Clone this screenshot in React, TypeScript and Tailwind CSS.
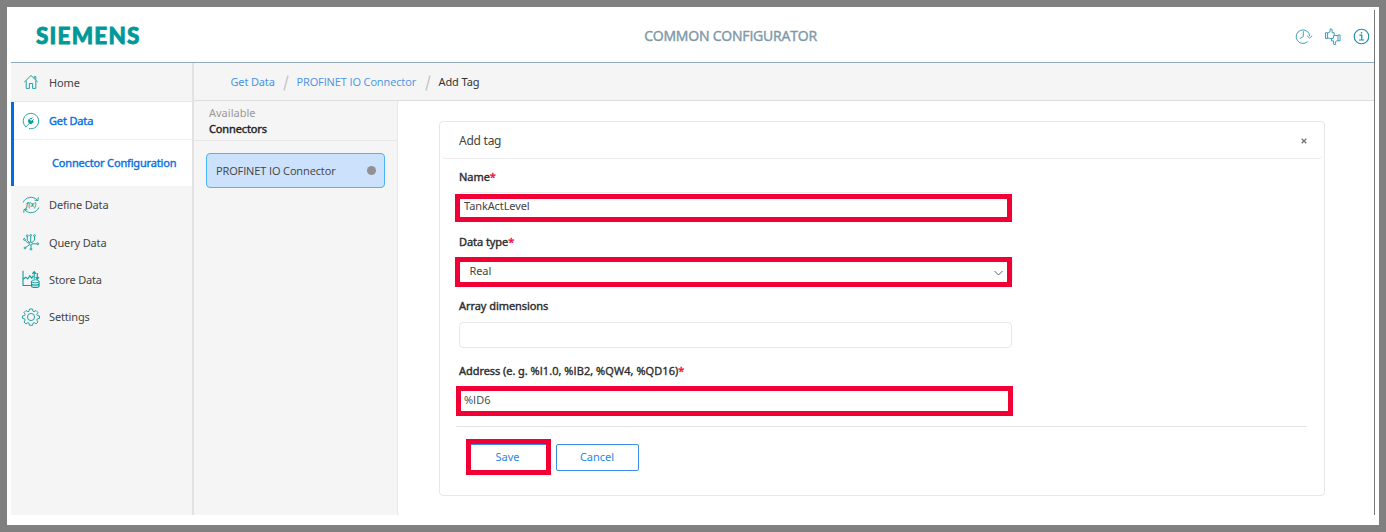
import type { ReactNode } from "react";

const BOLD = "[-webkit-text-stroke:0.4px_currentColor]";

function Icon({ children, size = 18, className = "" }: { children: ReactNode; size?: number; className?: string }) {
  return (
    <svg width={size} height={size} viewBox="0 0 18 18" fill="none" stroke="currentColor" strokeWidth="0.9" className={`shrink-0 ${className}`}>
      {children}
    </svg>
  );
}

const HomeIcon = () => (
  <Icon>
    <path d="M2.3 9 9 2.5 15.7 9M4.2 7.6v7.8h3.2v-4.9h3.2v4.9h3.2V7.6M12.2 5.2V3.6h1.6v3.2" />
  </Icon>
);
const ConnectIcon = () => (
  <Icon>
    <path d="M4.2 15.1A7.7 7.7 0 1 1 7 16.5M3.5 15.2l4-4" />
    <path d="M6.5 8.2 8.2 6.5l.9.6 1.5-1.5M9.9 9.1l1.7-1.7M6.5 8.2c-.3 2 .5 3.3 3.1 3.4l1.7-1.8Z" fill="currentColor" strokeWidth="1" />
  </Icon>
);
const DefineIcon = () => (
  <Icon>
    <path d="M1.2 6.5C3.2 1 11-.6 15.2 4M12.6 4.2l3.4.4.2-3.4M16.8 11.5C14.8 17 7 18.6 2.8 14M5.4 13.8l-3.4-.4-.2 3.4" />
    <text x="9" y="11.4" textAnchor="middle" fill="currentColor" stroke="none" fontSize="7" fontStyle="italic" fontWeight="600" fontFamily="Noto Sans, sans-serif">f(x)</text>
  </Icon>
);
const QueryIcon = () => (
  <Icon>
    <path d="M8.7 9V3.4M7.6 9.4 5.3 7.5V3.6M9.9 9.4l2.6-2V3.4M7 10.3 4.8 9.2l-1.6-2M10.6 10.8h4.2M7.4 11.8l-3.6 2.6M9 12.3v2.8" />
    <circle cx="8.8" cy="10.6" r="1.5" />
    <circle cx="8.7" cy="2.4" r="0.9" />
    <circle cx="5.3" cy="2.7" r="0.9" />
    <circle cx="12.5" cy="2.6" r="0.9" />
    <circle cx="2.4" cy="6.4" r="0.9" />
    <circle cx="15.8" cy="10.8" r="0.9" />
    <circle cx="3" cy="15" r="0.9" />
    <circle cx="9" cy="16.1" r="0.9" />
  </Icon>
);
const StoreIcon = () => (
  <Icon className="overflow-visible">
    <path d="M1 0.8v14.7h7.8M1 9.2l2.8-2 2 1.8 2-3.2 2 2.4 1.2-2.4" strokeWidth="1.1" />
    <path d="M12.2 8.8V2M10.3 3.8l1.9-2.2 1.9 2.2M15.3 3v6M13.6 7.2l1.7 2 1.7-2" strokeWidth="1.1" />
    <path d="M9.5 11.3v4.6c0 2 7.6 2 7.6 0v-4.6M9.5 13.6c0 2 7.6 2 7.6 0" strokeWidth="1.1" />
    <ellipse cx="13.3" cy="11.3" rx="3.8" ry="1.5" />
  </Icon>
);
const GearIcon = () => (
  <Icon>
    <circle cx="9" cy="9" r="3.6" />
    <path d="M7.5 1h3l.5 2.2 1.1.5L14 2.5 16 4.5 14.8 6.4l.5 1.1 2.2.5v2.4l-2.2.5-.5 1.1L16 14l-2 1.9-1.9-1.2-1.1.5-.5 2.1h-3L7 15.2l-1.1-.5L4 15.9 2 14l1.2-2-.5-1.1-2.2-.5V8l2.2-.5.5-1.1L2 4.5l2-2 1.9 1.2 1.1-.5Z" strokeLinejoin="round" />
  </Icon>
);

function NavItem({ icon, label, className }: { icon: ReactNode; label: string; className: string }) {
  return (
    <div className={`flex items-center gap-[9px] ${className}`}>
      <span className="text-[#0d9b9b] [-webkit-text-stroke:0]">{icon}</span>
      <span className="pt-[2px] tracking-[-0.15px]">{label}</span>
    </div>
  );
}

function Field({ label, required = false, children }: { label: ReactNode; required?: boolean; children: ReactNode }) {
  return (
    <div className="h-[64.6px]">
      <div className={`h-[18px] leading-[18px] tracking-[-0.06px] text-[#2e2e2e] ${BOLD}`}>
        {label}
        {required && <span className="text-[#f5103c]">*</span>}
      </div>
      {children}
    </div>
  );
}

function Slash() {
  return (
    <svg width="8" height="16" viewBox="0 0 8 16" className="mx-[7px]">
      <path d="M6 0.5 2 15.5" stroke="#cbcbcb" strokeWidth="1.6" />
    </svg>
  );
}

export default function App() {
  return (
    <div className="h-[532px] w-[1386px] overflow-hidden border-[7px] border-[#808080] bg-white pt-[3px] pr-[4px] pb-[10px] pl-[4px] font-['Noto_Sans',sans-serif] text-[11px] text-[#444]">
      <div className="flex h-[505px] flex-col border-r border-[#777]">
        <header className="grid h-[53px] grid-cols-[1fr_auto_1fr] items-center border-b border-[#8eacc1]">
          <div className="ml-[25px] flex">
            <span className="font-[Lato,sans-serif] text-[22.5px] leading-[26px] font-black tracking-[1.2px] text-[#009999] [-webkit-text-stroke:0.8px_currentColor]">SIEMENS</span>
          </div>
          <h1 className="mr-[-76px] pb-[2px] font-['Open_Sans',sans-serif] text-[14px] tracking-[-0.2px] text-[#7f99a9] [-webkit-text-stroke:0.45px_currentColor]">COMMON CONFIGURATOR</h1>
          <div className="flex items-center justify-end gap-[12px] pr-[4px] text-[#218fae]">
            <Icon size={17} className="overflow-visible">
              <path d="M15.6 8.6A7.2 7.2 0 1 0 13.4 14.4M8.8 3.3V9l-3.7 2.2M12.8 8.2l2.7 2.5 2.7-2.5" />
            </Icon>
            <Icon size={17} className="overflow-visible">
              <path d="M1.6 5h2.2v6.2H1.6ZM3.8 5.4 6.2 4.3 6.7.8l1.9.8V5h2.2v1.8L9.8 11H5.9l-2.1-.6" />
              <path d="M17 13.6h-2.2V7.4H17ZM14.8 13.2l-2.4 1.1-.5 3.5-1.9-.8v-3.4H7.8V11M10.4 7.8h2.2l2.2.4" />
            </Icon>
            <Icon size={17} className="overflow-visible">
              <circle cx="9" cy="9" r="7.7" strokeWidth="1.2" />
              <path d="M6.7 7.6h2.6v5M6.4 12.7h5.4M9 4.2v1.7" strokeWidth="1.3" />
            </Icon>
          </div>
        </header>
        <div className="flex flex-1">
          <aside className="w-[183px] border-r-2 border-[#e2e2e2] bg-[#f5f5f5]">
            <NavItem icon={<HomeIcon />} label="Home" className="h-[39px] border-b border-[#e9e9e9] pl-[11px]" />
            <div className="h-[84px] border-l-[3px] border-[#006ce6] bg-white text-[#0a70df]">
              <NavItem icon={<ConnectIcon />} label="Get Data" className={`h-[37px] pl-[8px] ${BOLD}`} />
              <div className={`flex h-[46px] items-center border-t border-[#efefef] pt-[2px] pl-[38px] tracking-[-0.16px] ${BOLD}`}>Connector Configuration</div>
            </div>
            <NavItem icon={<DefineIcon />} label="Define Data" className="h-[37.3px] pl-[11px]" />
            <NavItem icon={<QueryIcon />} label="Query Data" className="h-[37.3px] pl-[11px]" />
            <NavItem icon={<StoreIcon />} label="Store Data" className="h-[37.3px] pl-[11px]" />
            <NavItem icon={<GearIcon />} label="Settings" className="h-[37.3px] pl-[11px]" />
          </aside>
          <div className="flex flex-1 flex-col">
            <nav className="flex h-[38px] items-center border-b border-[#dedede] bg-[#f5f5f5] pt-[2px] pl-[36.5px] text-[#4a94e6]">
              <span className="w-[44px] tracking-[-0.15px] whitespace-nowrap">Get Data</span>
              <Slash />
              <span className="w-[120px] font-['Open_Sans',sans-serif] tracking-[-0.12px] whitespace-nowrap">PROFINET IO Connector</span>
              <Slash />
              <span className="tracking-[-0.1px] text-[#333]">Add Tag</span>
            </nav>
            <div className="flex flex-1">
              <section className="w-[204px] border-r border-[#e8e8e8] bg-[#f5f5f5]">
                <div className="h-[40px] border-b border-[#e6e6e6] pt-[4px] pl-[15px] leading-[16px]">
                  <div className="text-[#999]">Available</div>
                  <div className={`tracking-[-0.12px] text-[#222] ${BOLD}`}>Connectors</div>
                </div>
                <div className="mt-[12px] ml-[12px] flex h-[35px] w-[179px] items-center justify-between rounded-[4px] border border-[#49b4f8] bg-[#cce1fb] pr-[8px] pl-[9px]">
                  <span className="pt-[2px] font-['Open_Sans',sans-serif] tracking-[-0.12px]">PROFINET IO Connector</span>
                  <span className="size-[9px] rounded-full bg-[#919191]" />
                </div>
              </section>
              <main className="flex-1 pt-[20px] pl-[41px]">
                <div className="h-[375px] w-[886px] rounded-[4px] border border-[#e8e8e8]">
                  <div className="mx-[2px] flex h-[37px] items-center justify-between rounded-[4px] border-b border-[#ececec] pr-[15px] pl-[17px]">
                    <span className="pt-px text-[12px] tracking-[-0.25px]">Add tag</span>
                    <svg width="6" height="6" viewBox="0 0 6 6" stroke="#777" strokeWidth="1.4" className="mt-[2px]">
                      <path d="M.7.7l4.6 4.6M5.3.7.7 5.3" />
                    </svg>
                  </div>
                  <form className="pt-[9px] pl-[19px]">
                    <Field label="Name" required>
                      <div className="relative mt-[6px] flex h-[27px] w-[553px] items-center rounded-[4px] border border-[#ececec] pt-px pl-[4px] tracking-[-0.1px]">
                        TankActLevel
                        <div className="absolute top-[1px] -left-[5px] h-[28px] w-[557px] border-[5px] border-[#f00034]" />
                      </div>
                    </Field>
                    <Field label="Data type" required>
                      <div className="relative mt-[6px] flex h-[27px] w-[554px] items-center justify-between rounded-[4px] border border-[#ececec] pt-[2px] pr-[9px] pl-[9.5px]">
                        <span className="tracking-[-0.1px]">Real</span>
                        <svg width="9" height="6" viewBox="0 0 9 6" fill="none" stroke="#666" className="mt-[4px]">
                          <path d="M.5 1 4.5 5l4-4" />
                        </svg>
                        <div className="absolute -top-[1px] -left-[5px] h-[30px] w-[557px] border-[5px] border-[#f00034]" />
                      </div>
                    </Field>
                    <Field label="Array dimensions">
                      <div className="mt-[7px] h-[26px] w-[553px] rounded-[4px] border border-[#e8e8e8]" />
                    </Field>
                    <Field
                      label={
                        <>
                          Address (e. g. <span className="font-['Open_Sans',sans-serif] tracking-[0.08px]">%I1.0, %IB2, %QW4, %QD16)</span>
                        </>
                      }
                      required
                    >
                      <div className="relative mt-[6px] flex h-[27px] w-[554px] items-center rounded-[4px] border border-[#ececec] pt-px pl-[4px] font-['Open_Sans',sans-serif]">
                        %ID6
                        <div className="absolute -top-[1px] -left-[4px] h-[30px] w-[557px] border-[5px] border-[#f00034]" />
                      </div>
                    </Field>
                    <div className="mt-[-0.4px] -ml-[3px] flex w-[851px] gap-[5px] border-t border-[#e4e4e4] pt-[17px] pl-[12px] text-[#2c85e4]">
                      <button type="button" className="relative h-[27px] w-[83px] rounded-[2px] border border-[#3b8eea] pr-[4px]">
                        Save
                        <span className="absolute -top-[6px] -left-[3px] h-[36px] w-[85px] border-[5px] border-[#f00034]" />
                      </button>
                      <button type="button" className="h-[27px] w-[83px] rounded-[2px] border border-[#3b8eea] pr-px">Cancel</button>
                    </div>
                  </form>
                </div>
              </main>
            </div>
          </div>
        </div>
      </div>
    </div>
  );
}
